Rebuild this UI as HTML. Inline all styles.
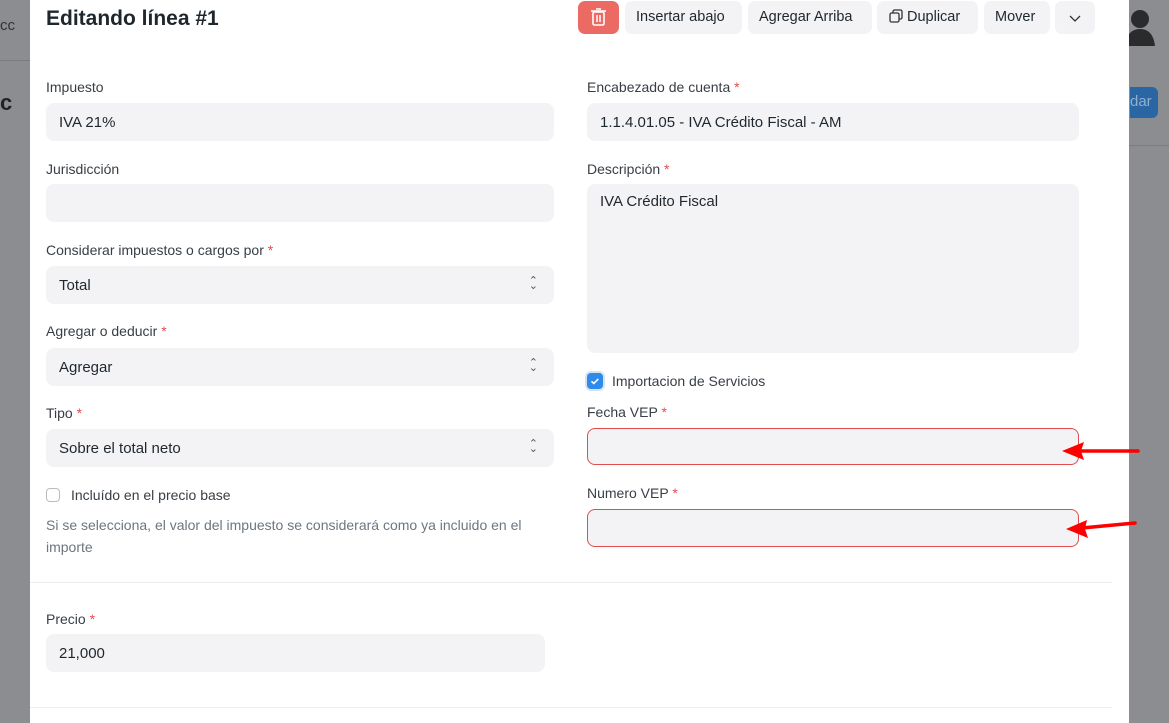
<!DOCTYPE html>
<html><head><meta charset="utf-8"><style>
*{box-sizing:border-box;margin:0;padding:0}
body{width:1169px;height:723px;overflow:hidden;background:#8b8d90;font-family:"Liberation Sans",sans-serif;position:relative;color:#1f272e}
.abs{position:absolute}
.modal{position:absolute;left:30px;top:0;width:1099px;height:723px;background:#fff}
.lbl{position:absolute;font-size:14px;color:#383e45}
.lbl i{color:#e24c4c;font-style:normal}
.inp{position:absolute;background:#f3f3f5;border-radius:8px;height:38px;font-size:15px;padding:11px 13px;color:#1f272e}
.sel::after{content:"⌃";position:absolute;right:16px;top:8px;font-size:11px;color:#555}
.sel::before{content:"⌄";position:absolute;right:16px;top:13px;font-size:11px;color:#555}
.btn{position:absolute;top:1px;height:33px;background:#f3f3f5;border-radius:7px;font-size:15px;padding:8px 11px;color:#1f272e}
.err{border:1px solid #e24c4c}
</style></head><body>
<div class="abs" style="left:0;top:17px;font-size:15px;color:#333">cc</div>
<div class="abs" style="left:0;top:60px;width:30px;height:1px;background:#7a7c80"></div>
<div class="abs" style="left:0;top:90px;font-size:22px;font-weight:bold;color:#222">c</div>
<div class="abs" style="left:1129px;top:145px;width:40px;height:1px;background:#7a7c80"></div>
<div class="abs" style="left:1130px;top:87px;width:28px;height:31px;background:#2a66a3;border-radius:0 6px 6px 0;color:#8fb0d0;font-size:15px;padding-top:6px">dar</div>
<svg class="abs" style="left:1124px;top:6px" width="32" height="40"><circle cx="16" cy="13" r="9" fill="#2a2b2d"/><path d="M1 40 Q3 23 16 23 Q29 23 31 40Z" fill="#2a2b2d"/></svg>
<div class="modal">
<div class="abs" style="left:16px;top:7px;font-size:21px;font-weight:bold;color:#1f272e">Editando línea #1</div>
<div class="btn" style="left:548px;width:41px;height:33px;background:#ec6a64;padding:0"><svg width="41" height="33"><rect x="15" y="11" width="11" height="13" rx="1.5" fill="none" stroke="#fff" stroke-width="1.6"/><path d="M13 10h15M18 8h5M19 14v7M22 14v7" stroke="#fff" stroke-width="1.5"/></svg></div>
<div class="btn" style="left:595px;width:117px;font-size:14.5px">Insertar abajo</div>
<div class="btn" style="left:718px;width:124px;font-size:14.5px">Agregar Arriba</div>
<div class="btn" style="left:847px;width:101px;padding-left:12px;font-size:14.5px"><svg width="14" height="14" style="vertical-align:-2px;margin-right:4px"><rect x="1" y="4" width="9" height="9" rx="1.5" fill="none" stroke="#333" stroke-width="1.3"/><path d="M4 4V2.5A1.5 1.5 0 0 1 5.5 1h6A1.5 1.5 0 0 1 13 2.5v6A1.5 1.5 0 0 1 11.5 10H10" fill="none" stroke="#333" stroke-width="1.3"/></svg>Duplicar</div>
<div class="btn" style="left:954px;width:66px;font-size:14.5px">Mover</div>
<div class="btn" style="left:1025px;width:40px;padding:0"><svg width="40" height="33"><path d="M15 15l5 5 5-5" fill="none" stroke="#333" stroke-width="1.3"/></svg></div>

<div class="lbl" style="left:16px;top:79px">Impuesto</div>
<div class="inp" style="left:16px;top:103px;width:508px">IVA 21%</div>
<div class="lbl" style="left:16px;top:161px">Jurisdicción</div>
<div class="inp" style="left:16px;top:184px;width:508px"></div>
<div class="lbl" style="left:16px;top:242px">Considerar impuestos o cargos por <i>*</i></div>
<div class="inp sel" style="left:16px;top:266px;width:508px">Total</div>
<div class="lbl" style="left:16px;top:323px">Agregar o deducir <i>*</i></div>
<div class="inp sel" style="left:16px;top:348px;width:508px">Agregar</div>
<div class="lbl" style="left:16px;top:405px">Tipo <i>*</i></div>
<div class="inp sel" style="left:16px;top:429px;width:508px">Sobre el total neto</div>
<div class="abs" style="left:16px;top:488px;width:14px;height:14px;border:1px solid #b8bcc2;border-radius:4px"></div>
<div class="lbl" style="left:41px;top:487px">Incluído en el precio base</div>
<div class="abs" style="left:16px;top:514px;font-size:14px;color:#6c7680;line-height:22px;width:500px">Si se selecciona, el valor del impuesto se considerará como ya incluido en el importe</div>

<div class="lbl" style="left:557px;top:79px">Encabezado de cuenta <i>*</i></div>
<div class="inp" style="left:557px;top:103px;width:492px">1.1.4.01.05 - IVA Crédito Fiscal - AM</div>
<div class="lbl" style="left:557px;top:161px">Descripción <i>*</i></div>
<div class="inp" style="left:557px;top:184px;width:492px;height:169px;padding-top:9px">IVA Crédito Fiscal</div>
<div class="abs" style="left:557px;top:373px;width:16px;height:16px;background:#2f8ae8;border-radius:4px;box-shadow:0 0 0 2px #d4e4f7"><svg width="16" height="16"><path d="M4.5 8.3l2.3 2.2 4.5-4.6" fill="none" stroke="#fff" stroke-width="1.6"/></svg></div>
<div class="lbl" style="left:582px;top:373px">Importacion de Servicios</div>
<div class="lbl" style="left:557px;top:404px">Fecha VEP <i>*</i></div>
<div class="inp err" style="left:557px;top:428px;width:492px;height:37px"></div>
<div class="lbl" style="left:557px;top:485px">Numero VEP <i>*</i></div>
<div class="inp err" style="left:557px;top:509px;width:492px;height:38px"></div>

<div class="abs" style="left:0;top:582px;width:1082px;height:1px;background:#ebedf0"></div>
<div class="lbl" style="left:16px;top:611px">Precio <i>*</i></div>
<div class="inp" style="left:16px;top:634px;width:499px">21,000</div>
<div class="abs" style="left:0;top:707px;width:1082px;height:1px;background:#ebedf0"></div>
</div>
<svg class="abs" style="left:1060px;top:438px" width="85" height="110"><path d="M18 13H78" stroke="#f00" stroke-width="3.5" stroke-linecap="round"/><path d="M2 13L24 4L21 13L24 22Z" fill="#f00"/><path d="M22 90L75 85" stroke="#f00" stroke-width="3.5" stroke-linecap="round"/><path d="M6 91L27 82L25 91L28 100Z" fill="#f00"/></svg>
</body></html>
